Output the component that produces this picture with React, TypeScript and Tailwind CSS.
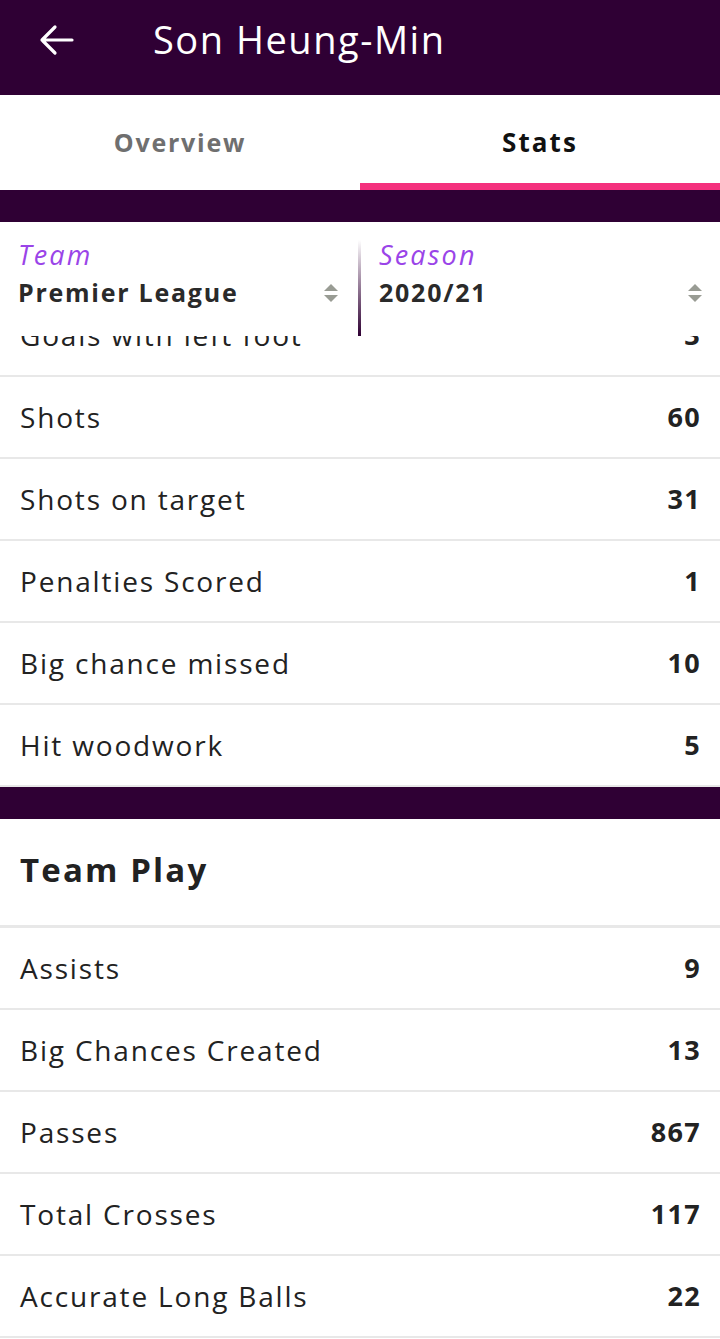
import React from "react"

type Stat = { label: string; value: string }

const attacking: Stat[] = [
  { label: "Shots", value: "60" },
  { label: "Shots on target", value: "31" },
  { label: "Penalties Scored", value: "1" },
  { label: "Big chance missed", value: "10" },
  { label: "Hit woodwork", value: "5" },
]

const teamPlay: Stat[] = [
  { label: "Assists", value: "9" },
  { label: "Big Chances Created", value: "13" },
  { label: "Passes", value: "867" },
  { label: "Total Crosses", value: "117" },
  { label: "Accurate Long Balls", value: "22" },
]

function SortIcon() {
  return (
    <svg width="18" height="20" viewBox="0 0 18 20" className="shrink-0">
      <path d="M9 1 L16 8 L2 8 Z" fill="#999c94" />
      <path d="M9 19 L16 12 L2 12 Z" fill="#999c94" />
    </svg>
  )
}

function StatRow({ stat }: { stat: Stat }) {
  return (
    <div className="flex h-[82px] shrink-0 items-center justify-between border-b-2 border-[#e8e8e8] pl-5 pr-[19px]">
      <span className="text-[28px] tracking-[0.065em] text-[#222]">{stat.label}</span>
      <span className="text-[27px] font-bold tracking-[0.05em] text-[#222]">{stat.value}</span>
    </div>
  )
}

export default function App() {
  return (
    <div className="min-h-[1339px] w-[720px] bg-white font-['Open_Sans',sans-serif]">
      {/* Header */}
      <div className="flex h-[95px] items-center bg-[#2f0034] pb-4">
        <svg width="36" height="32" viewBox="0 0 36 32" className="ml-[38px]">
          <path d="M34 16 H4 M17 3 L4 16 L17 29" fill="none" stroke="white" strokeWidth="3.2" strokeLinecap="round" strokeLinejoin="round" />
        </svg>
        <h1 className="ml-[79px] text-[38px] tracking-[0.04em] text-white">Son Heung-Min</h1>
      </div>

      {/* Tabs */}
      <div className="grid h-[95px] grid-cols-2">
        <div className="flex items-center justify-center text-[25px] font-bold tracking-[0.07em] text-[#6f6f6f]">Overview</div>
        <div className="flex items-center justify-center border-b-[7px] border-[#f4307d] pt-[7px] text-[26px] font-bold tracking-[0.08em] text-[#111]">
          Stats
        </div>
      </div>

      <div className="h-[32px] bg-[#2f0034]" />

      {/* Filters */}
      <div className="flex h-[114px]">
        <div className="flex w-[358px] items-start justify-between pl-[18px] pr-[18px] pt-[15px]">
          <div className="flex flex-col">
            <span className="text-[27px] italic leading-[36px] tracking-[0.08em] text-[#9a44e8]">Team</span>
            <span className="text-[25px] font-bold leading-[38px] tracking-[0.07em] text-[#2a2a2a]">Premier League</span>
          </div>
          <div className="mt-[46px]">
            <SortIcon />
          </div>
        </div>
        <div className="mt-[18px] w-[3px] bg-gradient-to-b from-white to-[#2f0034]" />
        <div className="flex flex-1 items-start justify-between pl-[18px] pr-[16px] pt-[15px]">
          <div className="flex flex-col">
            <span className="text-[27px] italic leading-[36px] tracking-[0.08em] text-[#9a44e8]">Season</span>
            <span className="text-[25px] font-bold leading-[38px] tracking-[0.07em] text-[#2a2a2a]">2020/21</span>
          </div>
          <div className="mt-[46px]">
            <SortIcon />
          </div>
        </div>
      </div>

      {/* Partially scrolled row under the filter bar */}
      <div className="flex h-[41px] flex-col justify-end overflow-hidden">
        <StatRow stat={{ label: "Goals with left foot", value: "3" }} />
      </div>

      {attacking.map((s) => (
        <StatRow key={s.label} stat={s} />
      ))}

      <div className="h-[32px] bg-[#2f0034]" />

      {/* Team Play */}
      <div className="flex h-[109px] items-center border-b-[3px] border-[#e8e8e8] px-5 pb-1">
        <h2 className="text-[33px] font-bold tracking-[0.065em] text-[#222]">Team Play</h2>
      </div>

      {teamPlay.map((s) => (
        <StatRow key={s.label} stat={s} />
      ))}
    </div>
  )
}
